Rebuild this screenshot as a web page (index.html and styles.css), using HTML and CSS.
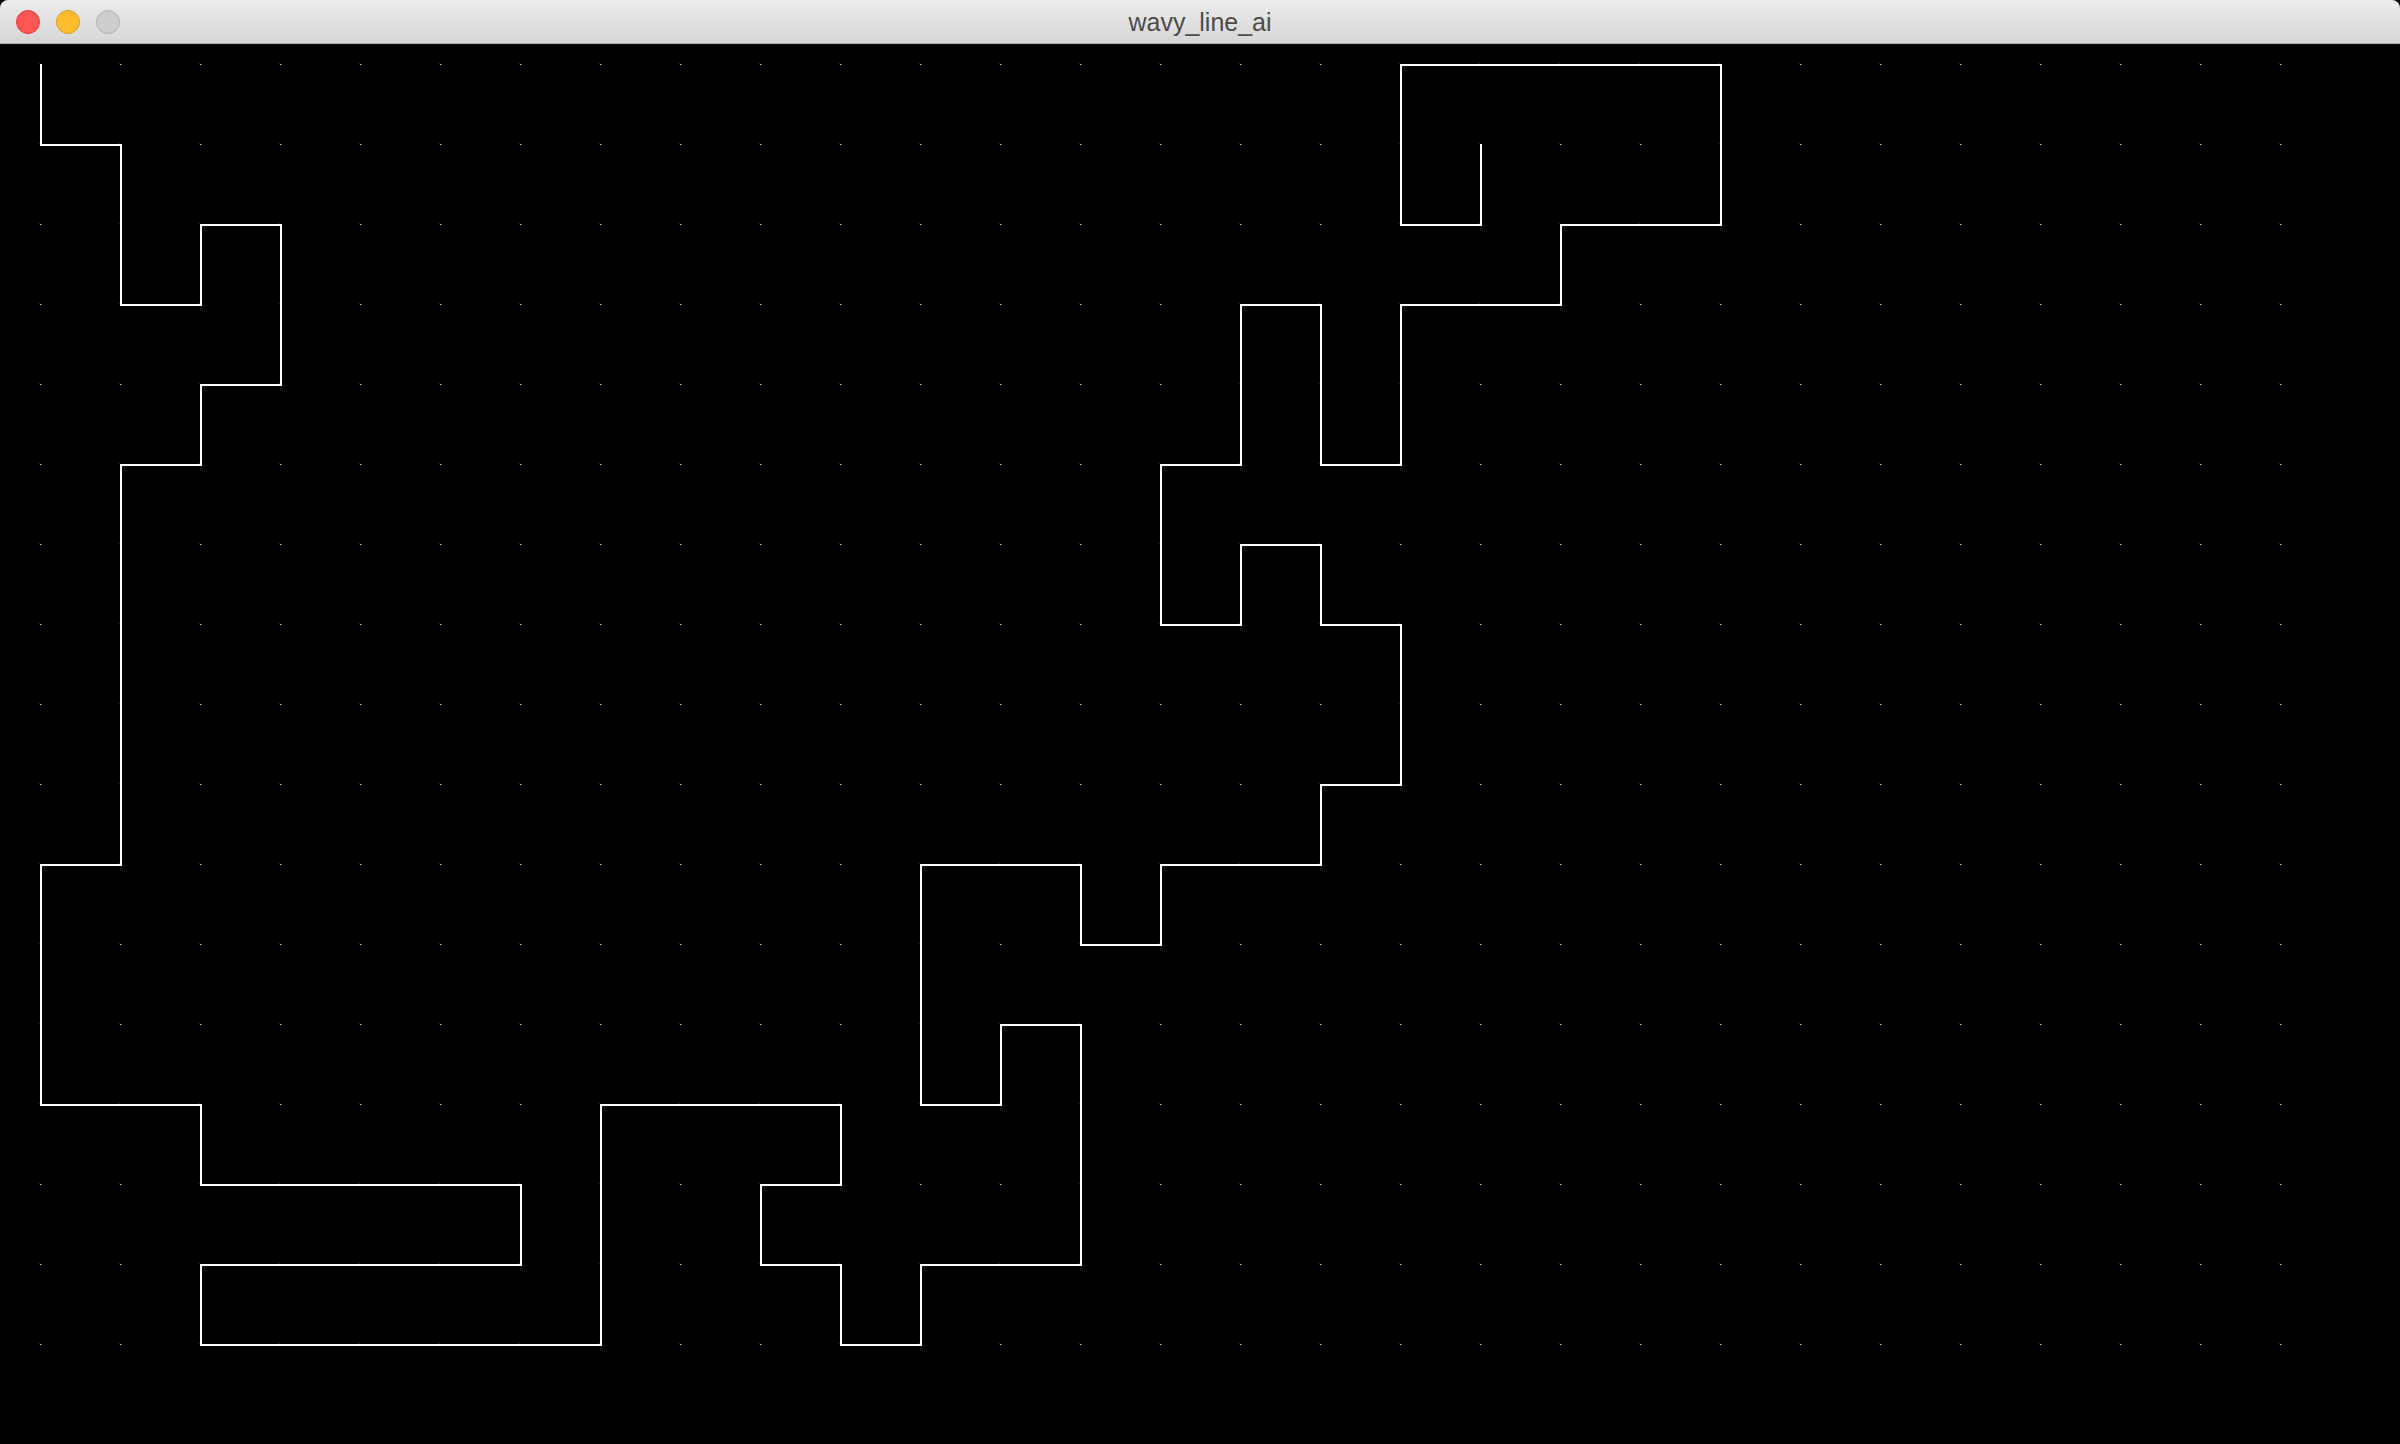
FILE: index.html
```html
<!DOCTYPE html>
<html>
<head>
<meta charset="utf-8">
<title>wavy_line_ai</title>
<link rel="stylesheet" href="styles.css">
</head>
<body>
<div class="window">
  <div class="titlebar">
    <div class="lights">
      <span class="light close"></span>
      <span class="light min"></span>
      <span class="light zoom"></span>
    </div>
    <div class="title">wavy_line_ai</div>
  </div>
  <div class="canvas">
    <svg class="drawing" width="2400" height="1400" viewBox="0 0 2400 1400" xmlns="http://www.w3.org/2000/svg">
      <defs>
        <pattern id="dots" x="39" y="19" width="80" height="80" patternUnits="userSpaceOnUse">
          <rect x="0" y="0" width="1" height="1" fill="#2e3018"/>
          <rect x="1" y="1" width="1" height="1" fill="#d2e84a"/>
          <rect x="2" y="1" width="1" height="1" fill="#4a5222"/>
        </pattern>
      </defs>
      <rect x="39" y="19" width="2260" height="1300" fill="url(#dots)" shape-rendering="crispEdges"/>
      <polyline fill="none" stroke="#ffffff" stroke-width="2" stroke-linejoin="miter" stroke-linecap="square"
        points="41,21 41,101 121,101 121,261 201,261 201,181 281,181 281,341 201,341 201,421 121,421 121,821 41,821 41,1061 201,1061 201,1141 521,1141 521,1221 201,1221 201,1301 601,1301 601,1061 841,1061 841,1141 761,1141 761,1221 841,1221 841,1301 921,1301 921,1221 1081,1221 1081,981 1001,981 1001,1061 921,1061 921,821 1081,821 1081,901 1161,901 1161,821 1321,821 1321,741 1401,741 1401,581 1321,581 1321,501 1241,501 1241,581 1161,581 1161,421 1241,421 1241,261 1321,261 1321,421 1401,421 1401,261 1561,261 1561,181 1721,181 1721,21 1401,21 1401,181 1481,181 1481,101"/>
    </svg>
  </div>
</div>
</body>
</html>
```

FILE: styles.css
```css
html, body {
  margin: 0;
  padding: 0;
  background: #000000;
}

.window {
  width: 2400px;
  height: 1444px;
  display: flex;
  flex-direction: column;
  background: #000000;
  overflow: hidden;
  border-radius: 8px 8px 0 0;
}

.titlebar {
  height: 43px;
  flex: 0 0 43px;
  background: linear-gradient(#ececec, #d6d6d6);
  border-bottom: 1px solid #b4b4b4;
  display: flex;
  align-items: center;
  justify-content: center;
  position: relative;
}

.lights {
  position: absolute;
  left: 16px;
  top: 10px;
  display: flex;
  gap: 16px;
}

.light {
  width: 22px;
  height: 22px;
  border-radius: 50%;
  border: 1px solid transparent;
  display: block;
}

.light.close {
  background: #fc5753;
  border-color: #de3f3b;
}

.light.min {
  background: #fdbc2e;
  border-color: #de9c22;
}

.light.zoom {
  background: #cdcdcd;
  border-color: #b3b3b3;
}

.title {
  font-family: "Liberation Sans", "Helvetica", Arial, sans-serif;
  font-size: 25px;
  color: #4b4b4b;
  line-height: 43px;
  padding-top: 1px;
}

.canvas {
  flex: 1 1 auto;
  background: #000000;
}

.drawing {
  display: block;
}
```
